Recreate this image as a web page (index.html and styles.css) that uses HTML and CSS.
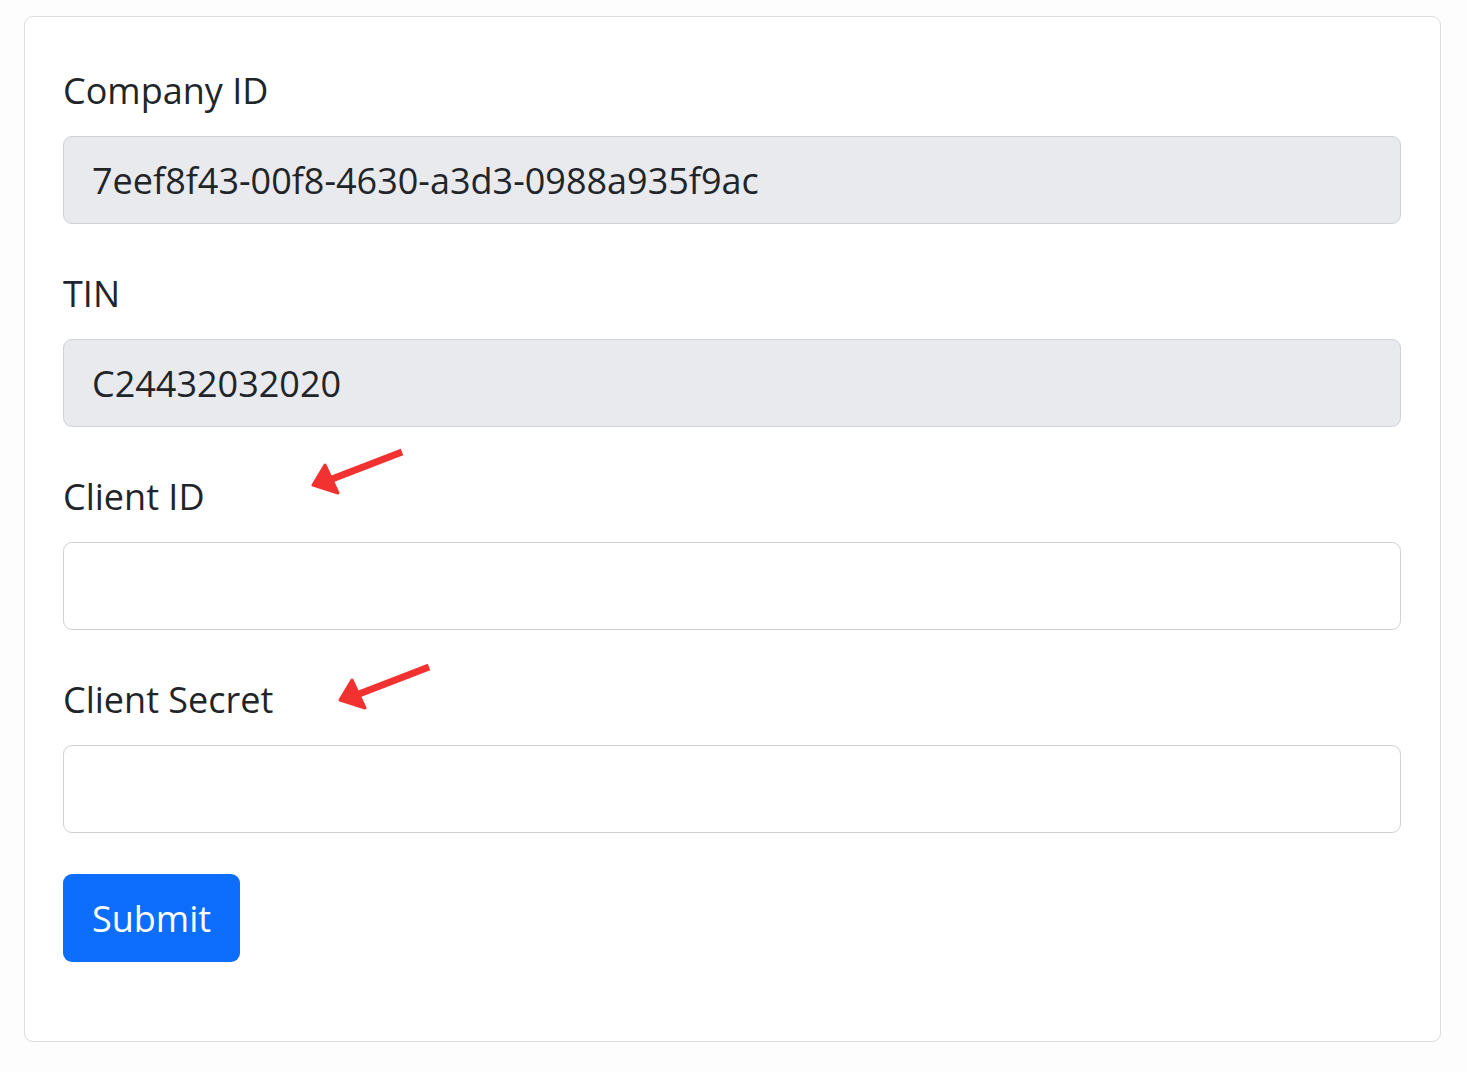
FILE: index.html
```html
<!DOCTYPE html>
<html lang="en">
<head>
    <meta charset="UTF-8">
    <meta name="viewport" content="width=device-width, initial-scale=1.0">
    <title>Company Settings</title>
    <link rel="stylesheet" href="styles.css">
</head>
<body>
    <div class="card">
        <form class="settings-form">
            <div class="form-group">
                <label for="companyId">Company ID</label>
                <input type="text" id="companyId" class="form-control" value="7eef8f43-00f8-4630-a3d3-0988a935f9ac" disabled>
            </div>

            <div class="form-group">
                <label for="tin">TIN</label>
                <input type="text" id="tin" class="form-control" value="C24432032020" disabled>
            </div>

            <div class="form-group">
                <label for="clientId">Client ID</label>
                <svg class="arrow arrow-client-id" viewBox="0 0 100 52" width="100" height="52">
                    <line x1="96" y1="6" x2="26" y2="33" />
                    <polygon points="7,39 19,19 32,47" />
                </svg>
                <input type="text" id="clientId" class="form-control">
            </div>

            <div class="form-group last">
                <label for="clientSecret">Client Secret</label>
                <svg class="arrow arrow-client-secret" viewBox="0 0 100 52" width="100" height="52">
                    <line x1="96" y1="6" x2="26" y2="33" />
                    <polygon points="7,39 19,19 32,47" />
                </svg>
                <input type="text" id="clientSecret" class="form-control">
            </div>

            <button type="submit" class="btn-primary">Submit</button>
        </form>
    </div>
</body>
</html>
```

FILE: styles.css
```css
body {
    font-family: "Open Sans", "Noto Sans", sans-serif;
    margin: 0;
    padding: 16px 26px 30px 24px;
    background-color: #fdfdfd;
    color: #212529;
}
.card {
    background: #fff;
    border: 1px solid #dddee0;
    border-radius: 9px;
    padding: 46px 39px 79px 38px;
}
.form-group {
    position: relative;
    margin-bottom: 42px;
}
.form-group.last {
    margin-bottom: 41px;
}
label {
    display: block;
    font-size: 36px;
    line-height: 55px;
    margin-bottom: 18px;
}
.form-control {
    display: block;
    box-sizing: border-box;
    width: 100%;
    height: 88px;
    margin: 0;
    padding: 0 28px;
    font-family: inherit;
    font-size: 36px;
    color: #212529;
    background: #fff;
    border: 1.5px solid #ced1d6;
    border-radius: 9px;
}
.form-control:disabled {
    background-color: #e9eaee;
    opacity: 1;
}
.btn-primary {
    display: block;
    height: 88px;
    padding: 0 29px;
    font-family: inherit;
    font-size: 36px;
    color: #fff;
    background-color: #0d6efd;
    border: none;
    border-radius: 9px;
    cursor: pointer;
}
.btn-primary:hover {
    background-color: #0b5ed7;
}

/* red pointers next to the editable fields */
.arrow {
    position: absolute;
}
.arrow line {
    stroke: #f23131;
    stroke-width: 7;
}
.arrow polygon {
    fill: #f23131;
    stroke: #f23131;
    stroke-width: 3;
    stroke-linejoin: round;
}
.arrow-client-id {
    left: 243px;
    top: -23px;
}
.arrow-client-secret {
    left: 270px;
    top: -11px;
}
```
